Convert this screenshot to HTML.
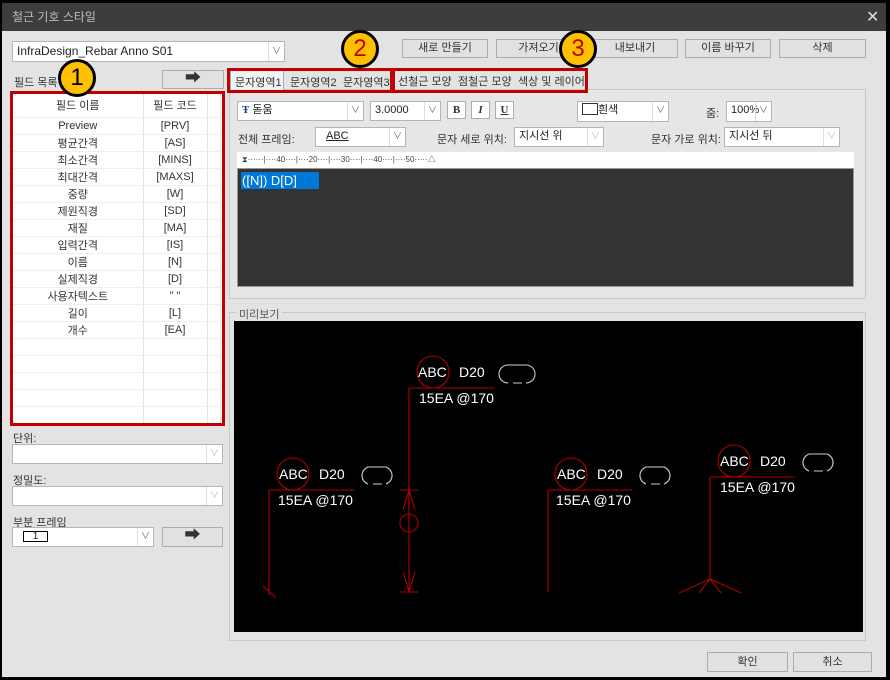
<!DOCTYPE html>
<html><head><meta charset="utf-8">
<style>
*{box-sizing:border-box;margin:0;padding:0}
body{width:890px;height:680px;background:#000;position:relative;overflow:hidden;font-family:"Liberation Sans","Noto Sans CJK KR",sans-serif;font-size:11px;color:#222}
.a{position:absolute}
.win{left:2px;top:3px;width:884px;height:674px;background:#e3e3e3}
.title{left:2px;top:3px;width:884px;height:28px;background:#3d3d3d;color:#bdbdbd;font-size:12px;line-height:28px;padding-left:10px}
.btn{position:absolute;border:1px solid #adadad;background:#e1e1e1;text-align:center;font-size:11px;line-height:16px;color:#333}
.cb{position:absolute;background:#fff;border:1px solid #b5b5b5;font-size:11px;line-height:17px;padding-left:4px}
.cb .dd{position:absolute;right:0;top:0;bottom:0;width:16px;border-left:1px solid #ddd;color:#666;font-size:9px;text-align:center;line-height:17px}
.red{position:absolute;border:3px solid #c00000}
.badge{position:absolute;width:38px;height:38px;border-radius:50%;background:#ffc000;border:3px solid #000;text-align:center;font-size:24px;line-height:32px}
table{border-collapse:collapse}
td{height:17px;border-bottom:1px solid #eee;border-right:1px solid #e4e4e4;text-align:center;font-size:11px;color:#333;padding:0}
.lbl{position:absolute;font-size:11px;color:#333}
</style></head><body>
<div class="a win"></div>
<div class="a title">철근 기호 스타일</div>
<div class="a" style="left:866px;top:7px;color:#ddd;font-size:16px">✕</div>

<div class="cb" style="left:12px;top:41px;width:273px;height:21px;font-size:12px;line-height:19px">InfraDesign_Rebar Anno S01<span class="dd" style="line-height:19px">∨</span></div>
<div class="btn" style="left:402px;top:39px;width:86px;height:19px">새로 만들기</div>
<div class="btn" style="left:496px;top:39px;width:85px;height:19px">가져오기</div>
<div class="btn" style="left:592px;top:39px;width:86px;height:19px">내보내기</div>
<div class="btn" style="left:685px;top:39px;width:86px;height:19px">이름 바꾸기</div>
<div class="btn" style="left:779px;top:39px;width:87px;height:19px">삭제</div>

<div class="lbl" style="left:14px;top:74px">필드 목록</div>
<div class="btn" style="left:162px;top:70px;width:62px;height:19px;font-size:16px;line-height:16px">➡</div>

<div class="a" style="left:12px;top:93px;width:211px;height:331px;background:#fff"></div>
<table class="a" style="left:13px;top:94px;width:208px">
<tr><td style="width:130px;height:23px">필드 이름</td><td style="width:64px;height:23px">필드 코드</td><td></td></tr>
<tr><td>Preview</td><td>[PRV]</td><td></td></tr>
<tr><td>평균간격</td><td>[AS]</td><td></td></tr>
<tr><td>최소간격</td><td>[MINS]</td><td></td></tr>
<tr><td>최대간격</td><td>[MAXS]</td><td></td></tr>
<tr><td>중량</td><td>[W]</td><td></td></tr>
<tr><td>제원직경</td><td>[SD]</td><td></td></tr>
<tr><td>재질</td><td>[MA]</td><td></td></tr>
<tr><td>입력간격</td><td>[IS]</td><td></td></tr>
<tr><td>이름</td><td>[N]</td><td></td></tr>
<tr><td>실제직경</td><td>[D]</td><td></td></tr>
<tr><td>사용자텍스트</td><td>" "</td><td></td></tr>
<tr><td>길이</td><td>[L]</td><td></td></tr>
<tr><td>개수</td><td>[EA]</td><td></td></tr>
<tr><td></td><td></td><td></td></tr>
<tr><td></td><td></td><td></td></tr>
<tr><td></td><td></td><td></td></tr>
<tr><td></td><td></td><td></td></tr>
<tr><td></td><td></td><td></td></tr>
</table>
<div class="red" style="left:10px;top:91px;width:215px;height:335px"></div>

<div class="lbl" style="left:13px;top:430px">단위:</div>
<div class="cb" style="left:12px;top:444px;width:211px;height:20px"><span class="dd" style="color:#bbb">∨</span></div>
<div class="lbl" style="left:13px;top:472px">정밀도:</div>
<div class="cb" style="left:12px;top:486px;width:211px;height:20px"><span class="dd" style="color:#bbb">∨</span></div>
<div class="lbl" style="left:13px;top:514px">부분 프레임</div>
<div class="cb" style="left:12px;top:527px;width:142px;height:20px"><span style="display:inline-block;border:1px solid #000;width:25px;height:11px;line-height:10px;text-align:center;margin:3px 0 0 6px;font-size:10px">1</span><span class="dd">∨</span></div>
<div class="btn" style="left:162px;top:527px;width:61px;height:20px;font-size:16px">➡</div>

<div class="a" style="left:229px;top:89px;width:637px;height:210px;border:1px solid #c8c8c8;background:#e6e6e6"></div>
<div class="a" style="left:230px;top:70px;width:54px;height:20px;background:#f2f2f2;border:1px solid #8fb0d8;border-bottom:none"></div>
<div class="lbl" style="left:235px;top:74px">문자영역1</div>
<div class="lbl" style="left:290px;top:74px">문자영역2</div>
<div class="lbl" style="left:343px;top:74px">문자영역3</div>
<div class="lbl" style="left:398px;top:73px">선철근 모양</div>
<div class="lbl" style="left:458px;top:73px">점철근 모양</div>
<div class="lbl" style="left:518px;top:73px">색상 및 레이어</div>
<div class="red" style="left:227px;top:68px;width:166px;height:25px"></div>
<div class="red" style="left:392px;top:68px;width:196px;height:25px"></div>

<div class="cb" style="left:237px;top:101px;width:127px;height:20px"><span style="color:#1a3e9a;font-family:'Liberation Serif',serif;font-weight:bold">Ŧ</span> 돋움<span class="dd">∨</span></div>
<div class="cb" style="left:370px;top:101px;width:71px;height:20px">3.0000<span class="dd">∨</span></div>
<div class="btn" style="left:447px;top:101px;width:19px;height:18px;background:#fff;font-family:'Liberation Serif',serif;font-weight:bold">B</div>
<div class="btn" style="left:471px;top:101px;width:19px;height:18px;background:#fff;font-family:'Liberation Serif',serif;font-weight:bold;font-style:italic">I</div>
<div class="btn" style="left:495px;top:101px;width:19px;height:18px;background:#fff;font-family:'Liberation Serif',serif;font-weight:bold;text-decoration:underline">U</div>
<div class="cb" style="left:577px;top:101px;width:92px;height:21px"><span style="display:inline-block;width:16px;height:12px;border:1px solid #333;vertical-align:-2px"></span>흰색<span class="dd">∨</span></div>
<div class="lbl" style="left:706px;top:105px">줌:</div>
<div class="cb" style="left:726px;top:101px;width:46px;height:21px">100%<span class="dd">∨</span></div>

<div class="lbl" style="left:238px;top:131px">전체 프레임:</div>
<div class="cb" style="left:315px;top:127px;width:91px;height:20px;padding-left:10px"><u>ABC</u><span class="dd">∨</span></div>
<div class="lbl" style="left:437px;top:131px">문자 세로 위치:</div>
<div class="cb" style="left:514px;top:127px;width:90px;height:20px">지시선 위<span class="dd" style="color:#bbb">∨</span></div>
<div class="lbl" style="left:651px;top:131px">문자 가로 위치:</div>
<div class="cb" style="left:724px;top:127px;width:116px;height:20px">지시선 뒤<span class="dd" style="color:#bbb">∨</span></div>

<div class="a" style="left:237px;top:152px;width:617px;height:16px;background:#fff"></div>
<div class="a" style="left:242px;top:154px;font-size:8px;color:#444;white-space:nowrap">⧗······|····40····|····20····|····30····|····40····|····50·····△</div>
<div class="a" style="left:237px;top:168px;width:617px;height:119px;background:#333;border:1px solid #999"></div>
<div class="a" style="left:241px;top:172px;width:78px;height:17px;background:#0078d7;color:#fff;font-size:13px;line-height:17px;padding-left:1px">([N]) D[D]</div>

<div class="a" style="left:229px;top:312px;width:637px;height:329px;border:1px solid #c8c8c8"></div>
<div class="a" style="left:236px;top:306px;background:#e3e3e3;padding:0 3px;color:#555">미리보기</div>
<div class="a" style="left:234px;top:321px;width:629px;height:311px;background:#000"></div>

<svg class="a" style="left:0;top:0" width="890" height="680" viewBox="0 0 890 680" font-family="Liberation Sans, sans-serif" font-size="14">
<g stroke="#b00000" stroke-width="1.1" fill="none">
<circle cx="433" cy="372" r="16"/><line x1="409" y1="388" x2="495" y2="388"/><line x1="409" y1="388" x2="409" y2="592"/>
<line x1="400" y1="490" x2="418" y2="490"/><line x1="400" y1="592" x2="418" y2="592"/>
<path d="M403 510 L409 490 L415 510 M403 572 L409 592 L415 572"/><circle cx="409" cy="523" r="9"/>
<circle cx="293" cy="474" r="16"/><line x1="269" y1="490" x2="355" y2="490"/><line x1="269" y1="490" x2="269" y2="595"/><line x1="263" y1="586" x2="276" y2="598"/>
<circle cx="571" cy="474" r="16"/><line x1="548" y1="490" x2="632" y2="490"/><line x1="548" y1="490" x2="548" y2="592"/>
<circle cx="734" cy="461" r="16"/><line x1="710" y1="477" x2="795" y2="477"/><line x1="710" y1="477" x2="710" y2="579"/>
<path d="M710 579 L679 593 M710 579 L699 593 M710 579 L721 593 M710 579 L741 593"/>
</g>
<g stroke="#ccc" stroke-width="1.1" fill="none">
<path d="M508 383 A9 9 0 0 1 508 365 H526 A9 9 0 0 1 526 383 M513 383 H522"/>
<path d="M368 484 A9 9 0 0 1 368 467 H386 A9 9 0 0 1 386 484 M373 484 H382"/>
<path d="M646 484 A9 9 0 0 1 646 467 H664 A9 9 0 0 1 664 484 M651 484 H660"/>
<path d="M809 471 A9 9 0 0 1 809 454 H827 A9 9 0 0 1 827 471 M814 471 H823"/>
</g>
<g fill="#fff">
<text x="418" y="377">ABC</text><text x="459" y="377">D20</text><text x="419" y="403">15EA @170</text>
<text x="279" y="479">ABC</text><text x="319" y="479">D20</text><text x="278" y="505">15EA @170</text>
<text x="557" y="479">ABC</text><text x="597" y="479">D20</text><text x="556" y="505">15EA @170</text>
<text x="720" y="466">ABC</text><text x="760" y="466">D20</text><text x="720" y="492">15EA @170</text>
</g>
</svg>

<div class="btn" style="left:707px;top:652px;width:81px;height:20px;line-height:18px">확인</div>
<div class="btn" style="left:793px;top:652px;width:79px;height:20px;line-height:18px">취소</div>

<div class="badge" style="left:58px;top:59px;color:#000">1</div>
<div class="badge" style="left:341px;top:30px;color:#c00000">2</div>
<div class="badge" style="left:559px;top:30px;color:#c00000">3</div>
</body></html>
